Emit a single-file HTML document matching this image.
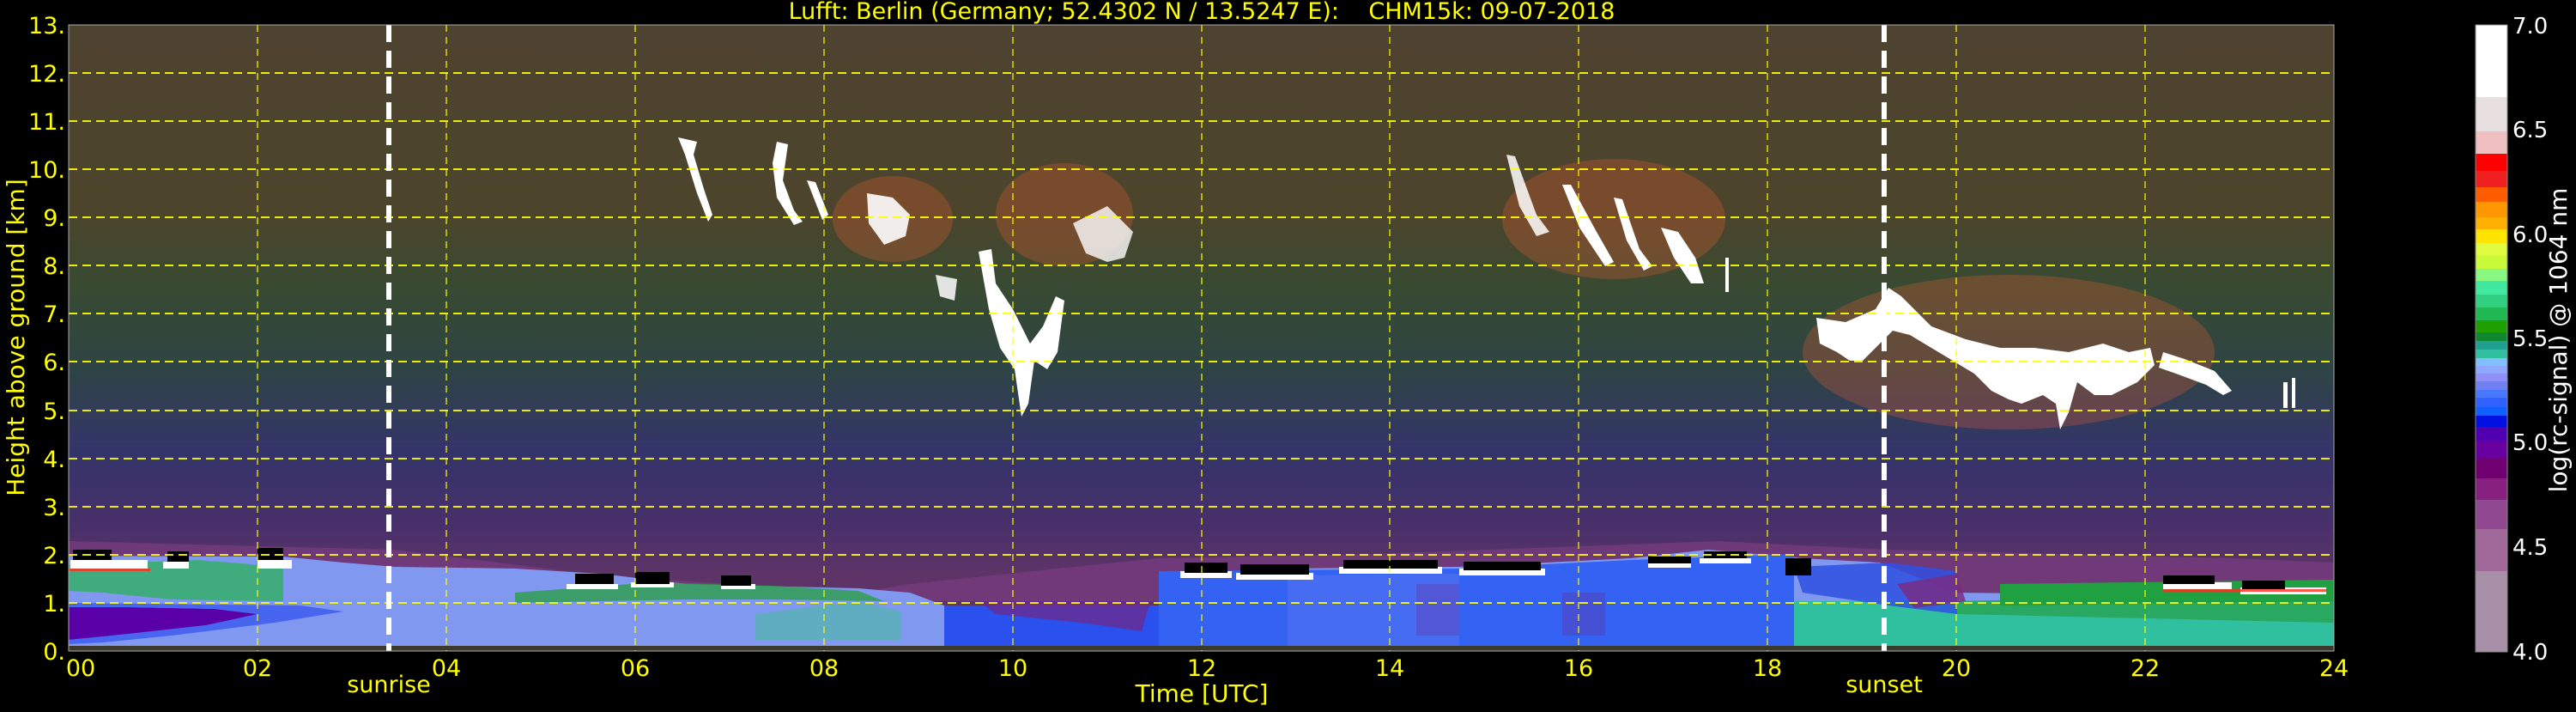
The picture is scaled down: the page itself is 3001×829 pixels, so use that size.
<!DOCTYPE html>
<html><head><meta charset="utf-8">
<style>
html,body{margin:0;padding:0;background:#000;}
body{width:3001px;height:824px;overflow:hidden;}
svg text{font-family:"DejaVu Sans","Liberation Sans",sans-serif;}
</style></head>
<body>
<svg width="3001" height="824" viewBox="0 0 3001 824" xmlns="http://www.w3.org/2000/svg">
<defs>
<linearGradient id="bg" x1="0" y1="29" x2="0" y2="758" gradientUnits="userSpaceOnUse">
<stop offset="0" stop-color="#4e4230"/>
<stop offset="0.3" stop-color="#4c452c"/>
<stop offset="0.42" stop-color="#384a32"/>
<stop offset="0.55" stop-color="#2e4444"/>
<stop offset="0.68" stop-color="#34346a"/>
<stop offset="0.8" stop-color="#48306a"/>
<stop offset="0.88" stop-color="#5e3468"/>
<stop offset="1" stop-color="#5e3468"/>
</linearGradient>
</defs>

<rect x="80" y="29" width="2639" height="729" fill="url(#bg)"/>

<!-- boundary layer -->
<polygon fill="#7a3c80" opacity="0.7" points="80,630 460,640 700,670 1000,690 1060,680 1348,650 1600,645 2000,630 2200,640 2600,650 2719,655 2719,700 80,700"/>
<polygon fill="#8098f0" points="80,647 330,648 400,655 460,660 600,662 700,668 800,680 1000,685 1060,690 1100,705 1350,710 1350,670 1500,662 1700,660 1900,650 1990,640 2100,650 2190,655 2280,690 2719,695 2719,752 80,752"/>
<polygon fill="#30b060" opacity="0.8" points="80,658 230,652 330,660 330,700 200,698 120,690 80,688"/>
<polygon fill="#20a030" opacity="0.7" points="600,690 760,678 900,682 1000,688 1030,700 900,698 800,698 600,702"/>
<polygon fill="#40c090" opacity="0.5" points="880,715 1000,700 1050,712 1050,745 880,745"/>
<polygon fill="#5a00a8" points="80,707 150,707 250,709 300,715 240,728 150,738 80,745"/>
<polygon fill="#3050f0" opacity="0.7" points="80,702 350,705 400,712 320,725 200,740 120,748 80,750 80,745 150,738 240,728 300,715 250,709 150,707 80,707"/>
<polygon fill="#2a50ee" points="1100,705 1350,705 1350,752 1100,752"/>
<polygon fill="#6a2a90" opacity="0.8" points="1140,700 1340,700 1330,735 1260,725 1160,715"/>
<polygon fill="#3462f2" points="1350,665 1700,662 1900,652 2090,645 2090,752 1350,752"/>
<polygon fill="#5878f0" opacity="0.5" points="1500,670 1700,668 1700,752 1500,752"/>
<polygon fill="#6a30a0" opacity="0.35" points="1650,680 1700,680 1700,740 1650,740"/>
<polygon fill="#6a30a0" opacity="0.35" points="1820,690 1870,690 1870,740 1820,740"/>
<polygon fill="#30c0a0" points="2090,700 2719,700 2719,752 2090,752"/>
<polygon fill="#28a860" points="2280,700 2719,690 2719,725 2500,720 2280,715"/>
<polygon fill="#20a040" points="2330,680 2719,675 2719,700 2330,705"/>
<polygon fill="#3050e0" opacity="0.85" points="2090,660 2200,655 2280,665 2280,715 2200,705 2100,690"/>
<polygon fill="#7a2a80" opacity="0.8" points="2210,680 2280,668 2290,700 2230,708"/>
<g fill="#fff">
<rect x="82" y="652" width="90" height="10"/><rect x="190" y="654" width="30" height="8"/>
<rect x="300" y="652" width="40" height="10"/>
<rect x="660" y="680" width="60" height="6"/><rect x="735" y="678" width="50" height="6"/>
<rect x="840" y="680" width="40" height="6"/>
<rect x="1375" y="665" width="60" height="8"/><rect x="1440" y="667" width="90" height="8"/>
<rect x="1560" y="660" width="120" height="8"/><rect x="1700" y="662" width="100" height="8"/>
<rect x="1920" y="655" width="50" height="6"/><rect x="1980" y="650" width="60" height="6"/>
<rect x="2520" y="678" width="80" height="8"/><rect x="2610" y="684" width="100" height="8"/>
</g>
<g fill="#000">
<rect x="85" y="640" width="45" height="12"/><rect x="195" y="642" width="25" height="12"/>
<rect x="300" y="638" width="30" height="14"/>
<rect x="670" y="668" width="45" height="12"/><rect x="740" y="666" width="40" height="14"/>
<rect x="840" y="670" width="35" height="12"/>
<rect x="1380" y="655" width="50" height="12"/><rect x="1445" y="657" width="80" height="12"/>
<rect x="1565" y="652" width="110" height="10"/><rect x="1705" y="654" width="90" height="10"/>
<rect x="1920" y="648" width="50" height="8"/><rect x="1985" y="642" width="50" height="8"/>
<rect x="2080" y="650" width="30" height="20"/>
<rect x="2520" y="670" width="60" height="10"/><rect x="2612" y="676" width="50" height="10"/>
</g>
<g fill="#ff3020" opacity="0.8">
<rect x="80" y="662" width="95" height="3"/><rect x="2520" y="686" width="190" height="3"/>
</g>
<rect x="80" y="752" width="2639" height="6" fill="#3a3a2a"/>

<!-- clouds -->
<g fill="#ff6030" opacity="0.25">
<ellipse cx="1040" cy="255" rx="70" ry="50"/>
<ellipse cx="1240" cy="250" rx="80" ry="60"/>
<ellipse cx="1880" cy="255" rx="130" ry="70"/>
<ellipse cx="2340" cy="410" rx="240" ry="90"/>
</g>
<g fill="#fff">
<path d="M790,160 L812,165 L808,180 L820,220 L830,250 L825,258 L812,225 L798,180 Z"/>
<path d="M905,165 L918,168 L912,210 L925,245 L935,258 L925,262 L905,230 L900,190 Z"/>
<path d="M940,210 L950,212 L965,250 L958,256 Z"/>
<path d="M1010,225 L1040,230 L1060,250 L1055,275 L1030,285 L1012,260 Z" opacity="0.9"/>
<path d="M1090,320 L1115,325 L1112,350 L1095,345 Z" opacity="0.85"/>
<path d="M1140,293 L1155,290 L1160,330 L1180,360 L1200,400 L1215,380 L1230,345 L1240,350 L1232,410 L1220,430 L1205,420 L1198,470 L1190,485 L1182,430 L1165,405 L1152,360 Z"/>
<path d="M1250,260 L1290,240 L1320,270 L1310,300 L1290,305 L1265,295 Z" opacity="0.8"/>
<path d="M1755,180 L1765,182 L1790,250 L1805,270 L1790,275 L1770,240 Z" opacity="0.85"/>
<path d="M1820,215 L1830,215 L1860,270 L1880,305 L1870,310 L1840,265 Z"/>
<path d="M1880,230 L1890,232 L1910,290 L1925,310 L1915,315 L1895,280 Z"/>
<path d="M1935,265 L1955,270 L1975,300 L1985,330 L1970,330 L1950,300 Z"/>
<rect x="2010" y="300" width="4" height="40"/>
<polygon points="2116,370 2150,375 2185,360 2200,335 2215,345 2250,380 2290,395 2330,405 2370,405 2410,410 2450,400 2480,410 2505,405 2510,425 2490,445 2460,460 2440,460 2420,445 2410,480 2400,500 2395,470 2380,460 2355,470 2340,465 2320,455 2300,435 2275,420 2250,405 2225,390 2205,385 2190,400 2170,420 2155,420 2140,410 2120,400"/>
<polygon points="2520,410 2545,418 2580,432 2600,455 2590,460 2570,448 2535,435 2515,428"/>
<rect x="2660" y="445" width="5" height="30"/><rect x="2670" y="440" width="4" height="35"/>
</g>

<!-- grid -->
<g stroke="#ffff00" stroke-width="2" stroke-dasharray="10,6" fill="none" opacity="0.9">
<line x1="80" y1="702" x2="2719" y2="702"/><line x1="80" y1="646" x2="2719" y2="646"/>
<line x1="80" y1="590" x2="2719" y2="590"/><line x1="80" y1="534" x2="2719" y2="534"/>
<line x1="80" y1="478" x2="2719" y2="478"/><line x1="80" y1="421" x2="2719" y2="421"/>
<line x1="80" y1="365" x2="2719" y2="365"/><line x1="80" y1="309" x2="2719" y2="309"/>
<line x1="80" y1="253" x2="2719" y2="253"/><line x1="80" y1="197" x2="2719" y2="197"/>
<line x1="80" y1="141" x2="2719" y2="141"/><line x1="80" y1="85" x2="2719" y2="85"/>
</g>
<g stroke="#ffff00" stroke-width="1.5" stroke-dasharray="8,6" fill="none" opacity="0.8">
<line x1="300" y1="29" x2="300" y2="758"/><line x1="520" y1="29" x2="520" y2="758"/>
<line x1="740" y1="29" x2="740" y2="758"/><line x1="960" y1="29" x2="960" y2="758"/>
<line x1="1180" y1="29" x2="1180" y2="758"/><line x1="1400" y1="29" x2="1400" y2="758"/>
<line x1="1619" y1="29" x2="1619" y2="758"/><line x1="1839" y1="29" x2="1839" y2="758"/>
<line x1="2059" y1="29" x2="2059" y2="758"/><line x1="2279" y1="29" x2="2279" y2="758"/>
<line x1="2499" y1="29" x2="2499" y2="758"/>
</g>
<g stroke="#fff" stroke-width="6" stroke-dasharray="20,10">
<line x1="453" y1="29" x2="453" y2="758"/>
<line x1="2195" y1="29" x2="2195" y2="758"/>
</g>
<rect x="80" y="29" width="2639" height="729" fill="none" stroke="#aaa" stroke-width="1"/>

<text x="1400" y="22" font-size="27" fill="#ffff00" text-anchor="middle" xml:space="preserve">Lufft: Berlin (Germany; 52.4302 N / 13.5247 E):    CHM15k: 09-07-2018</text>

<g font-size="27" fill="#ffff00" text-anchor="end">
<text x="76" y="768">0.</text><text x="76" y="712">1.</text><text x="76" y="656">2.</text>
<text x="76" y="600">3.</text><text x="76" y="544">4.</text><text x="76" y="488">5.</text>
<text x="76" y="431">6.</text><text x="76" y="375">7.</text><text x="76" y="319">8.</text>
<text x="76" y="263">9.</text><text x="76" y="207">10.</text><text x="76" y="151">11.</text>
<text x="76" y="95">12.</text><text x="76" y="39">13.</text>
</g>
<text transform="translate(28,393) rotate(-90)" font-size="28" fill="#ffff00" text-anchor="middle">Height above ground [km]</text>

<g font-size="27" fill="#ffff00" text-anchor="middle">
<text x="94" y="787">00</text><text x="300" y="787">02</text><text x="520" y="787">04</text>
<text x="740" y="787">06</text><text x="960" y="787">08</text><text x="1180" y="787">10</text>
<text x="1400" y="787">12</text><text x="1619" y="787">14</text><text x="1839" y="787">16</text>
<text x="2059" y="787">18</text><text x="2279" y="787">20</text><text x="2499" y="787">22</text>
<text x="2719" y="787">24</text>
<text x="453" y="806">sunrise</text>
<text x="2195" y="806">sunset</text>
<text x="1400" y="817" font-size="28">Time [UTC]</text>
</g>

<g>
<rect x="2884" y="29" width="37" height="84" fill="#ffffff"/>
<rect x="2884" y="113" width="37" height="40" fill="#e8e0e0"/>
<rect x="2884" y="153" width="37" height="26" fill="#f0c0c0"/>
<rect x="2884" y="179" width="37" height="20" fill="#ff0000"/>
<rect x="2884" y="199" width="37" height="19" fill="#f02020"/>
<rect x="2884" y="218" width="37" height="17" fill="#ff5c00"/>
<rect x="2884" y="235" width="37" height="18" fill="#ff9800"/>
<rect x="2884" y="253" width="37" height="14" fill="#ffb000"/>
<rect x="2884" y="267" width="37" height="16" fill="#ffe400"/>
<rect x="2884" y="283" width="37" height="14" fill="#e0fa40"/>
<rect x="2884" y="297" width="37" height="16" fill="#c8fa38"/>
<rect x="2884" y="313" width="37" height="14" fill="#88f880"/>
<rect x="2884" y="327" width="37" height="16" fill="#40e8a0"/>
<rect x="2884" y="343" width="37" height="15" fill="#30d080"/>
<rect x="2884" y="358" width="37" height="15" fill="#20b850"/>
<rect x="2884" y="373" width="37" height="14" fill="#20a000"/>
<rect x="2884" y="387" width="37" height="10" fill="#108830"/>
<rect x="2884" y="397" width="37" height="10" fill="#20a090"/>
<rect x="2884" y="407" width="37" height="10" fill="#30c0a0"/>
<rect x="2884" y="417" width="37" height="9" fill="#80c0ff"/>
<rect x="2884" y="426" width="37" height="9" fill="#90a8ff"/>
<rect x="2884" y="435" width="37" height="9" fill="#9090f8"/>
<rect x="2884" y="444" width="37" height="10" fill="#7080f0"/>
<rect x="2884" y="454" width="37" height="9" fill="#4878ff"/>
<rect x="2884" y="463" width="37" height="11" fill="#3060ff"/>
<rect x="2884" y="474" width="37" height="10" fill="#1060ff"/>
<rect x="2884" y="484" width="37" height="13" fill="#0010e0"/>
<rect x="2884" y="497" width="37" height="16" fill="#5000b0"/>
<rect x="2884" y="513" width="37" height="20" fill="#6800a0"/>
<rect x="2884" y="533" width="37" height="24" fill="#700070"/>
<rect x="2884" y="557" width="37" height="25" fill="#882080"/>
<rect x="2884" y="582" width="37" height="34" fill="#904890"/>
<rect x="2884" y="616" width="37" height="49" fill="#a06898"/>
<rect x="2884" y="665" width="37" height="94" fill="#a890a8"/>
<rect x="2884" y="29" width="37" height="730" fill="none" stroke="#888" stroke-width="1"/>
</g>
<g font-size="26" fill="#fff">
<text x="2927" y="39">7.0</text><text x="2927" y="160">6.5</text><text x="2927" y="282">6.0</text>
<text x="2927" y="403">5.5</text><text x="2927" y="524">5.0</text><text x="2927" y="646">4.5</text>
<text x="2927" y="768">4.0</text>
</g>
<text transform="translate(2990,396) rotate(-90)" font-size="28" fill="#fff" text-anchor="middle">log(rc-signal) @ 1064 nm</text>
</svg>
</body></html>
